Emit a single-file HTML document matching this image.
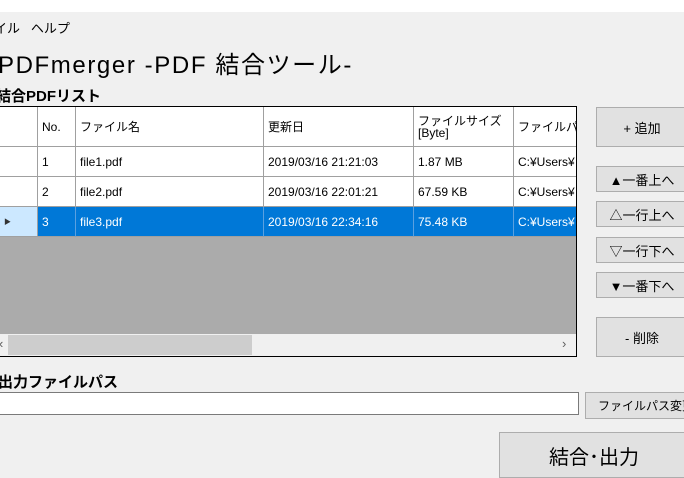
<!DOCTYPE html><html><head><meta charset="utf-8"><style>
body{margin:0;width:684px;height:474px;background:#f0f0f0;position:relative;overflow:hidden;font-family:"Liberation Sans","Noto Sans CJK JP",sans-serif;color:#000}
.a{position:absolute}
.btn{position:absolute;background:#e1e1e1;border:1px solid #adadad;box-sizing:border-box;display:flex;align-items:center;justify-content:center;font-size:13px}
.c{position:absolute;box-sizing:border-box;border-right:1px solid #a0a0a0;border-bottom:1px solid #a0a0a0;font-size:12px;padding-left:4px;display:flex;align-items:center;white-space:nowrap;overflow:hidden}
.s{background:#0078d7;color:#fff;border-right-color:#5aa0e0}
</style></head><body>
<div class="a" style="left:0;top:0;width:684px;height:12px;background:#fff"></div>
<div class="a" style="left:-6px;top:18px;font-size:13px">イル&nbsp;&nbsp;&nbsp;ヘルプ</div>
<div class="a" style="left:-2px;top:45px;font-size:24px;letter-spacing:1.6px">PDFmerger -PDF 結合ツール-</div>
<div class="a" style="left:-4px;top:85px;font-size:15px;font-weight:bold">結合PDFリスト</div>
<div class="a" style="left:-1px;top:106px;width:578px;height:251px;border:1px solid #000;box-sizing:border-box;background:#ababab;overflow:hidden">
<div class="a" style="left:0;top:0;width:578px;height:40px;background:#fff"></div>
<div class="c" style="left:0;top:0;width:38px;height:40px;background:#fff"></div>
<div class="c" style="left:38px;top:0;width:38px;height:40px">No.</div>
<div class="c" style="left:76px;top:0;width:188px;height:40px">ファイル名</div>
<div class="c" style="left:264px;top:0;width:150px;height:40px">更新日</div>
<div class="c" style="left:414px;top:0;width:100px;height:40px;line-height:12px;font-size:12px">ファイルサイズ<br>[Byte]</div>
<div class="c" style="left:514px;top:0;width:70px;height:40px">ファイルパス</div>
<div class="c" style="left:0;top:40px;width:38px;height:30px;background:#fff"></div>
<div class="c" style="left:38px;top:40px;width:38px;height:30px;background:#fff">1</div>
<div class="c" style="left:76px;top:40px;width:188px;height:30px;background:#fff">file1.pdf</div>
<div class="c" style="left:264px;top:40px;width:150px;height:30px;background:#fff">2019/03/16 21:21:03</div>
<div class="c" style="left:414px;top:40px;width:100px;height:30px;background:#fff">1.87 MB</div>
<div class="c" style="left:514px;top:40px;width:70px;height:30px;background:#fff">C:¥Users¥</div>
<div class="c" style="left:0;top:70px;width:38px;height:30px;background:#fff"></div>
<div class="c" style="left:38px;top:70px;width:38px;height:30px;background:#fff">2</div>
<div class="c" style="left:76px;top:70px;width:188px;height:30px;background:#fff">file2.pdf</div>
<div class="c" style="left:264px;top:70px;width:150px;height:30px;background:#fff">2019/03/16 22:01:21</div>
<div class="c" style="left:414px;top:70px;width:100px;height:30px;background:#fff">67.59 KB</div>
<div class="c" style="left:514px;top:70px;width:70px;height:30px;background:#fff">C:¥Users¥</div>
<div class="c" style="left:0;top:100px;width:38px;height:30px;background:#cce8ff;font-size:7px;color:#333">▶</div>
<div class="c s" style="left:38px;top:100px;width:38px;height:30px">3</div>
<div class="c s" style="left:76px;top:100px;width:188px;height:30px">file3.pdf</div>
<div class="c s" style="left:264px;top:100px;width:150px;height:30px">2019/03/16 22:34:16</div>
<div class="c s" style="left:414px;top:100px;width:100px;height:30px">75.48 KB</div>
<div class="c s" style="left:514px;top:100px;width:70px;height:30px">C:¥Users¥</div>
<div class="a" style="left:0;top:227px;width:578px;height:22px;background:#f0f0f0"></div>
<div class="a" style="left:8px;top:228px;width:244px;height:20px;background:#cdcdcd"></div>
<div class="a" style="left:-1px;top:229px;font-size:13px;color:#606060">‹</div>
<div class="a" style="left:562px;top:229px;font-size:13px;color:#606060">›</div>
</div>
<div class="btn" style="left:596px;top:107px;width:92px;height:40px">+ 追加</div>
<div class="btn" style="left:596px;top:166px;width:92px;height:26px">▲一番上へ</div>
<div class="btn" style="left:596px;top:201px;width:92px;height:26px">△一行上へ</div>
<div class="btn" style="left:596px;top:237px;width:92px;height:26px">▽一行下へ</div>
<div class="btn" style="left:596px;top:272px;width:92px;height:26px">▼一番下へ</div>
<div class="btn" style="left:596px;top:317px;width:92px;height:40px">- 削除</div>
<div class="a" style="left:-2px;top:371px;font-size:15px;font-weight:bold">出力ファイルパス</div>
<div class="a" style="left:-1px;top:392px;width:580px;height:23px;background:#fff;border:1px solid #7a7a7a;box-sizing:border-box"></div>
<div class="btn" style="left:585px;top:392px;width:104px;height:27px;justify-content:flex-start;padding-left:12px;font-size:12px;white-space:nowrap">ファイルパス変更</div>
<div class="btn" style="left:499px;top:432px;width:190px;height:46px;font-size:20px">結合･出力</div>
</body></html>
